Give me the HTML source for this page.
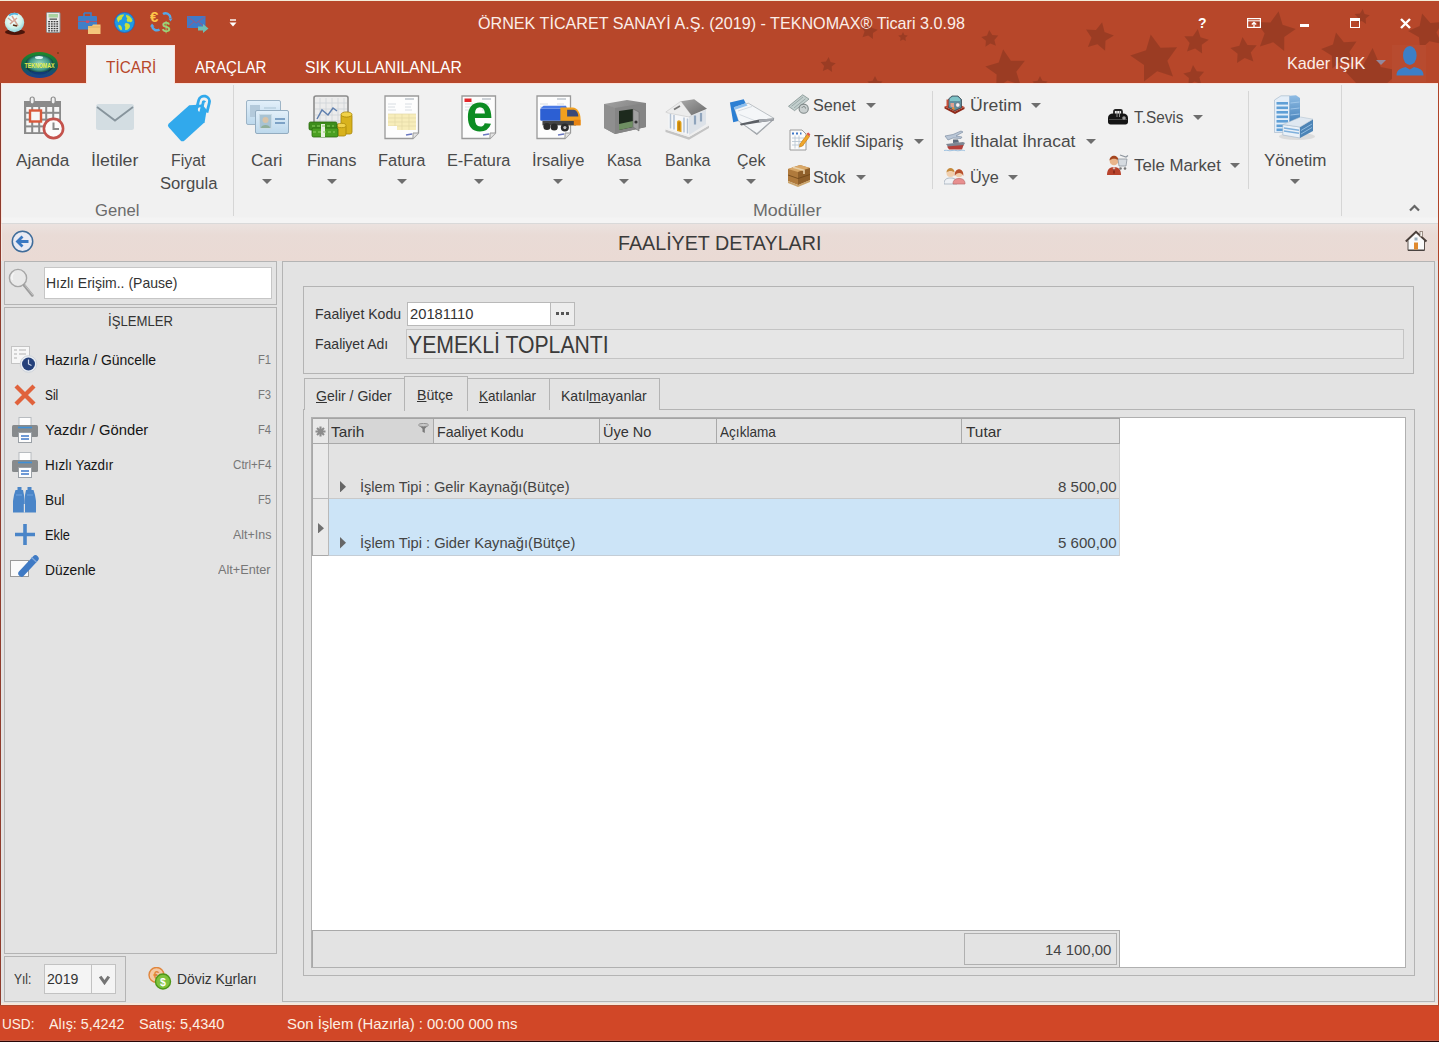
<!DOCTYPE html>
<html lang="tr">
<head>
<meta charset="utf-8">
<title>TEKNOMAX Ticari</title>
<style>
*{box-sizing:border-box;margin:0;padding:0}
html,body{width:1439px;height:1042px;overflow:hidden;background:#e3e3e3}
body{position:relative;font-family:"Liberation Sans",sans-serif;color:#333}
.abs{position:absolute}
.t{position:absolute;white-space:nowrap;line-height:1;transform-origin:0 0}
#titlebar{left:0;top:0;width:1439px;height:83px;background:#b7472a;overflow:hidden}
#topline{left:0;top:0;width:1439px;height:1px;background:#f4ecd8}
#ribbon{left:1px;top:83px;width:1437px;height:141px;background:linear-gradient(#f1f1f1,#f1f1f1 133px,#f4f4f4 134px);border-top:1px solid #fbe3dc;border-bottom:1px solid #d9d9d9;border-left:1px solid #fbe6df}
#hdr{left:1px;top:224px;width:1437px;height:37px;background:linear-gradient(#ebe2df,#e9dbd6 30%,#eadad4);border-left:1px solid #f6e9e4}
#lborder{left:0;top:83px;width:1px;height:922px;background:#8e3b2c}
#rborder{left:1438px;top:83px;width:1px;height:922px;background:#b04428}
#status{left:0;top:1005px;width:1439px;height:36px;background:#d14727;border-top:1px solid #b04a30;border-bottom:1px solid #c0604a}
#cream{left:1px;top:1003px;width:1437px;height:2px;background:#f7e6d8}
#botline{left:0;top:1041px;width:1439px;height:1px;background:#2a0606}
.arr{position:absolute;width:0;height:0;border-left:5px solid transparent;border-right:5px solid transparent;border-top:5.5px solid #6e6e6e}
.vsep{position:absolute;width:1px;background:#d6d6d6}
.box{position:absolute;border:1px solid #b9b9b9}
</style>
</head>
<body>
<div id="titlebar" class="abs"></div>
<div id="topline" class="abs"></div>
<div id="ribbon" class="abs"></div>
<div id="hdr" class="abs"></div>
<div id="lborder" class="abs"></div>
<div id="rborder" class="abs"></div>
<div id="status" class="abs"></div>
<div id="cream" class="abs"></div>
<div id="botline" class="abs"></div>
<svg class="abs" style="left:0;top:1px" width="1439" height="82" viewBox="0 1 1439 82" fill="#000" fill-opacity="0.15"><polygon points="870.6,22.1 872.2,27.9 877.9,29.7 873.0,33.1 872.9,39.1 868.2,35.4 862.5,37.3 864.5,31.6 861.1,26.8 867.0,27.0"/><polygon points="903.0,32.0 904.5,35.0 907.8,35.5 905.4,37.8 905.9,41.0 903.0,39.5 900.1,41.0 900.6,37.8 898.2,35.5 901.5,35.0"/><polygon points="989.2,30.0 992.3,35.1 998.3,35.5 994.4,40.0 995.9,45.8 990.4,43.5 985.4,46.7 985.9,40.8 981.2,37.0 987.0,35.6"/><polygon points="828.7,57.0 830.6,62.0 835.8,63.2 831.7,66.6 832.1,71.9 827.7,69.0 822.8,71.0 824.1,65.9 820.6,61.9 825.9,61.6"/><polygon points="1003.1,49.2 1010.9,60.7 1024.9,60.8 1016.3,71.8 1020.6,85.1 1007.5,80.4 996.1,88.5 996.6,74.6 985.3,66.4 998.7,62.4"/><polygon points="1102.1,22.3 1104.6,32.0 1113.9,35.4 1105.5,40.8 1105.1,50.7 1097.4,44.3 1087.9,47.0 1091.5,37.8 1086.0,29.5 1095.9,30.1"/><polygon points="875.0,76.0 877.4,80.8 882.6,81.5 878.8,85.2 879.7,90.5 875.0,88.0 870.3,90.5 871.2,85.2 867.4,81.5 872.6,80.8"/><polygon points="1040.0,76.0 1042.4,80.8 1047.6,81.5 1043.8,85.2 1044.7,90.5 1040.0,88.0 1035.3,90.5 1036.2,85.2 1032.4,81.5 1037.6,80.8"/><polygon points="1150.7,34.4 1160.5,47.8 1177.1,47.3 1167.4,60.7 1173.0,76.4 1157.2,71.3 1144.0,81.5 1144.0,64.9 1130.2,55.5 1146.0,50.3"/><polygon points="1197.8,29.1 1200.5,37.3 1208.8,39.7 1201.8,44.8 1202.1,53.5 1195.1,48.4 1187.0,51.4 1189.6,43.1 1184.3,36.3 1192.9,36.3"/><polygon points="1242.5,37.1 1247.5,44.9 1256.8,45.3 1250.8,52.5 1253.4,61.4 1244.7,58.0 1237.0,63.1 1237.6,53.8 1230.3,48.1 1239.3,45.8"/><polygon points="1278.6,11.3 1282.6,24.7 1295.8,29.1 1284.3,36.9 1284.2,50.9 1273.2,42.3 1259.9,46.6 1264.6,33.5 1256.5,22.1 1270.4,22.6"/><polygon points="1336.0,32.4 1343.9,42.3 1356.5,41.5 1349.4,52.0 1354.1,63.7 1342.0,60.3 1332.3,68.4 1331.8,55.8 1321.1,49.0 1332.9,44.6"/><polygon points="1372.6,48.0 1380.8,67.0 1400.9,71.0 1385.5,84.6 1387.9,105.0 1370.2,94.5 1351.5,103.1 1356.0,83.0 1342.1,67.9 1362.6,66.0"/><polygon points="1362.7,9.0 1364.6,14.0 1369.8,15.2 1365.7,18.6 1366.1,23.9 1361.7,21.0 1356.8,23.0 1358.1,17.9 1354.6,13.9 1359.9,13.6"/><polygon points="1422.1,13.6 1430.4,23.1 1442.9,21.7 1436.5,32.5 1441.8,44.0 1429.5,41.2 1420.2,49.7 1419.0,37.2 1408.0,31.0 1419.6,26.0"/><polygon points="1193.0,65.0 1196.8,71.3 1204.1,71.7 1199.4,77.2 1201.2,84.3 1194.5,81.5 1188.3,85.4 1188.9,78.1 1183.3,73.5 1190.4,71.8"/></svg><div class="t " id="t0" style="left:477.5px;top:14.00px;font-size:16.6px;line-height:19px;color:#fbeee9;transform:scaleX(0.9725);">ÖRNEK TİCARET SANAYİ A.Ş. (2019) - TEKNOMAX® Ticari 3.0.98</div><div class="abs" style="left:86px;top:45px;width:89px;height:39px;background:#f1f1f1;border:1px solid #fbe3dc;border-bottom:0"></div><div class="t " id="t1" style="left:105.5px;top:58.00px;font-size:17px;line-height:19px;color:#b7472a;transform:scaleX(0.9043);">TİCARİ</div><div class="t " id="t2" style="left:195px;top:58.00px;font-size:17px;line-height:19px;color:#fff;transform:scaleX(0.8890);">ARAÇLAR</div><div class="t " id="t3" style="left:304.5px;top:58.00px;font-size:17px;line-height:19px;color:#fff;transform:scaleX(0.9276);">SIK KULLANILANLAR</div><div class="t " id="t4" style="left:1287px;top:54.00px;font-size:17px;line-height:19px;color:#fbeee9;transform:scaleX(0.9536);">Kader IŞIK</div><div class="arr" style="left:1376.3px;top:59.8px;border-top-color:#94889c"></div><div class="abs" style="left:1392px;top:45px;width:34px;height:37px;background:#b84b2f"></div>
<svg class="abs" style="left:1396px;top:46px" width="28" height="30" viewBox="0 0 28 30"><ellipse cx="13.800" cy="9.500" rx="6.800" ry="9.400" fill="#3d7fc6"/><path d="M0.500 29.500C0.500 23.500 5 22.500 9.500 21L13.800 23.500L18 21C23 22.500 27.500 23.500 27.500 29.500Z" fill="#3d7fc6"/></svg>
<div class="t" style="left:1198px;top:16px;font-size:14px;font-weight:bold;color:#fff">?</div>
<svg class="abs" style="left:1246.500px;top:18px" width="14" height="10" viewBox="0 0 14 10"><rect x="0.600" y="0.600" width="12.800" height="8.800" fill="none" stroke="#fff" stroke-width="1.200"/><path d="M0.600 2.800h12.800" stroke="#fff" stroke-width="1"/><path d="M7 9V5M4.800 6.500L7 4.300L9.200 6.500" stroke="#fff" stroke-width="1.300" fill="none"/></svg>
<div class="abs" style="left:1300px;top:24px;width:9px;height:3px;background:#fff"></div>
<div class="abs" style="left:1350px;top:18px;width:10px;height:10px;border:1.500px solid #fff;border-top-width:3px"></div>
<svg class="abs" style="left:1400px;top:17.800px" width="11" height="11" viewBox="0 0 11 11"><path d="M1 1L10 10M10 1L1 10" stroke="#fff" stroke-width="2.4"/></svg>
<div class="t " id="t5" style="left:16px;top:150.00px;font-size:17.2px;line-height:20px;color:#4a4a4a;transform:scaleX(0.9975);">Ajanda</div><div class="t " id="t6" style="left:91px;top:150.00px;font-size:17.2px;line-height:20px;color:#4a4a4a;transform:scaleX(1.0336);">İletiler</div><div class="t " id="t7" style="left:171px;top:150.00px;font-size:17.2px;line-height:20px;color:#4a4a4a;transform:scaleX(0.9235);">Fiyat</div><div class="t " id="t8" style="left:251px;top:150.00px;font-size:17.2px;line-height:20px;color:#4a4a4a;transform:scaleX(0.9963);">Cari</div><div class="arr" style="left:261.8px;top:179.0px;border-top-color:#6e6e6e"></div><div class="t " id="t9" style="left:307px;top:150.00px;font-size:17.2px;line-height:20px;color:#4a4a4a;transform:scaleX(0.9575);">Finans</div><div class="arr" style="left:326.8px;top:179.0px;border-top-color:#6e6e6e"></div><div class="t " id="t10" style="left:378px;top:150.00px;font-size:17.2px;line-height:20px;color:#4a4a4a;transform:scaleX(0.9540);">Fatura</div><div class="arr" style="left:396.8px;top:179.0px;border-top-color:#6e6e6e"></div><div class="t " id="t11" style="left:447px;top:150.00px;font-size:17.2px;line-height:20px;color:#4a4a4a;transform:scaleX(0.9480);">E-Fatura</div><div class="arr" style="left:473.8px;top:179.0px;border-top-color:#6e6e6e"></div><div class="t " id="t12" style="left:532px;top:150.00px;font-size:17.2px;line-height:20px;color:#4a4a4a;transform:scaleX(0.9623);">İrsaliye</div><div class="arr" style="left:553.3px;top:179.0px;border-top-color:#6e6e6e"></div><div class="t " id="t13" style="left:607px;top:150.00px;font-size:17.2px;line-height:20px;color:#4a4a4a;transform:scaleX(0.8778);">Kasa</div><div class="arr" style="left:619.3px;top:179.0px;border-top-color:#6e6e6e"></div><div class="t " id="t14" style="left:665px;top:150.00px;font-size:17.2px;line-height:20px;color:#4a4a4a;transform:scaleX(0.9316);">Banka</div><div class="arr" style="left:682.8px;top:179.0px;border-top-color:#6e6e6e"></div><div class="t " id="t15" style="left:737px;top:150.00px;font-size:17.2px;line-height:20px;color:#4a4a4a;transform:scaleX(0.9288);">Çek</div><div class="arr" style="left:746.3px;top:179.0px;border-top-color:#6e6e6e"></div><div class="t " id="t16" style="left:1264px;top:150.00px;font-size:17.2px;line-height:20px;color:#4a4a4a;transform:scaleX(0.9895);">Yönetim</div><div class="arr" style="left:1290.3px;top:179.0px;border-top-color:#6e6e6e"></div><div class="t " id="t17" style="left:160px;top:173.00px;font-size:17.2px;line-height:20px;color:#4a4a4a;transform:scaleX(0.9688);">Sorgula</div><div class="t " id="t18" style="left:813px;top:95.00px;font-size:17.2px;line-height:20px;color:#4a4a4a;transform:scaleX(0.9439);">Senet</div><div class="arr" style="left:866.3px;top:102.5px;border-top-color:#6e6e6e"></div><div class="t " id="t19" style="left:814px;top:131.00px;font-size:17.2px;line-height:20px;color:#4a4a4a;transform:scaleX(0.9267);">Teklif Sipariş</div><div class="arr" style="left:914.3px;top:138.5px;border-top-color:#6e6e6e"></div><div class="t " id="t20" style="left:813px;top:167.00px;font-size:17.2px;line-height:20px;color:#4a4a4a;transform:scaleX(0.9417);">Stok</div><div class="arr" style="left:855.8px;top:174.5px;border-top-color:#6e6e6e"></div><div class="t " id="t21" style="left:969.5px;top:95.00px;font-size:17.2px;line-height:20px;color:#4a4a4a;transform:scaleX(1.0255);">Üretim</div><div class="arr" style="left:1031.3px;top:102.5px;border-top-color:#6e6e6e"></div><div class="t " id="t22" style="left:970px;top:131.00px;font-size:17.2px;line-height:20px;color:#4a4a4a;transform:scaleX(1.0121);">İthalat İhracat</div><div class="arr" style="left:1086.3px;top:138.5px;border-top-color:#6e6e6e"></div><div class="t " id="t23" style="left:969.5px;top:167.00px;font-size:17.2px;line-height:20px;color:#4a4a4a;transform:scaleX(0.9451);">Üye</div><div class="arr" style="left:1008.3px;top:174.5px;border-top-color:#6e6e6e"></div><div class="t " id="t24" style="left:1133.5px;top:107.00px;font-size:17.2px;line-height:20px;color:#4a4a4a;transform:scaleX(0.8916);">T.Sevis</div><div class="arr" style="left:1193.3px;top:114.5px;border-top-color:#6e6e6e"></div><div class="t " id="t25" style="left:1133.5px;top:155.00px;font-size:17.2px;line-height:20px;color:#4a4a4a;transform:scaleX(0.9781);">Tele Market</div><div class="arr" style="left:1230.3px;top:162.5px;border-top-color:#6e6e6e"></div><div class="t " id="t26" style="left:95px;top:200.00px;font-size:17.2px;line-height:20px;color:#6b6b6b;transform:scaleX(0.9678);">Genel</div><div class="t " id="t27" style="left:753px;top:200.00px;font-size:17.2px;line-height:20px;color:#6b6b6b;transform:scaleX(1.0376);">Modüller</div><div class="vsep" style="left:233px;top:85px;height:131px"></div><div class="vsep" style="left:1341px;top:85px;height:131px"></div><div class="vsep" style="left:932px;top:91px;height:98px"></div><div class="vsep" style="left:1248px;top:91px;height:98px"></div><svg class="abs" style="left:1409px;top:204px" width="11" height="8" viewBox="0 0 11 8"><path d="M1 6.5L5.5 2L10 6.5" stroke="#666" stroke-width="2.2" fill="none"/></svg><svg class="abs" style="left:23px;top:96px" width="44" height="44" viewBox="0 0 44 44"><rect x="1" y="5" width="37" height="33" fill="#8a8a8a"/><rect x="3.2" y="11.0" width="5" height="4.8" fill="#f6f6f6"/><rect x="10.2" y="11.0" width="5" height="4.8" fill="#f6f6f6"/><rect x="17.2" y="11.0" width="5" height="4.8" fill="#f6f6f6"/><rect x="24.2" y="11.0" width="5" height="4.8" fill="#f6f6f6"/><rect x="31.2" y="11.0" width="5" height="4.8" fill="#f6f6f6"/><rect x="3.2" y="17.8" width="5" height="4.8" fill="#f6f6f6"/><rect x="10.2" y="17.8" width="5" height="4.8" fill="#f6f6f6"/><rect x="17.2" y="17.8" width="5" height="4.8" fill="#f6f6f6"/><rect x="24.2" y="17.8" width="5" height="4.8" fill="#f6f6f6"/><rect x="31.2" y="17.8" width="5" height="4.8" fill="#f6f6f6"/><rect x="3.2" y="24.6" width="5" height="4.8" fill="#f6f6f6"/><rect x="10.2" y="24.6" width="5" height="4.8" fill="#f6f6f6"/><rect x="17.2" y="24.6" width="5" height="4.8" fill="#f6f6f6"/><rect x="24.2" y="24.6" width="5" height="4.8" fill="#f6f6f6"/><rect x="31.2" y="24.6" width="5" height="4.8" fill="#f6f6f6"/><rect x="3.2" y="31.4" width="5" height="4.8" fill="#f6f6f6"/><rect x="10.2" y="31.4" width="5" height="4.8" fill="#f6f6f6"/><rect x="17.2" y="31.4" width="5" height="4.8" fill="#f6f6f6"/><rect x="24.2" y="31.4" width="5" height="4.8" fill="#f6f6f6"/><rect x="31.2" y="31.4" width="5" height="4.8" fill="#f6f6f6"/><rect x="7.2" y="1" width="4" height="7" rx="2" fill="#f1f1f1" stroke="#8a8a8a" stroke-width="1.2"/><rect x="28.2" y="1" width="4" height="7" rx="2" fill="#f1f1f1" stroke="#8a8a8a" stroke-width="1.2"/><rect x="7" y="14.5" width="11" height="11" fill="#f6f6f6" stroke="#d9583a" stroke-width="2.4"/><circle cx="30.5" cy="32.5" r="9.6" fill="#fbfbfb" stroke="#c4524c" stroke-width="2.6"/><path d="M30.5 26.5V33H36" stroke="#8a8a8a" stroke-width="2" fill="none"/></svg><svg class="abs" style="left:95.5px;top:104px" width="38" height="26" viewBox="0 0 38 26"><rect x="0" y="0" width="38" height="26" rx="2.5" fill="#d3dde2"/><path d="M1 3L19 16.5L37 3" stroke="#87949c" stroke-width="1.8" fill="none"/></svg><svg class="abs" style="left:165px;top:94px" width="48" height="48" viewBox="0 0 48 48"><path d="M-17 -11.500H10L20 -3.500V3.500L10 11.500H-17Q-20 11.500 -20 8.500V-8.500Q-20 -11.500 -17 -11.500Z" fill="#31a9ec" transform="translate(24.500 26.500) rotate(-42)"/><circle cx="35" cy="15.500" r="2.300" fill="#f1f1f1"/><path d="M-5.500 9V-2a5.500 5.500 0 0 1 11 0V8M-0.500 9V-1.500a1 1 0 0 1 1.500 0" stroke="#31a9ec" stroke-width="2.800" fill="none" transform="translate(38.500 9.500) rotate(14)"/></svg><svg class="abs" style="left:246px;top:100px" width="44" height="35" viewBox="0 0 44 35"><defs><linearGradient id="cg" x1="0" y1="0" x2="0" y2="1"><stop offset="0" stop-color="#e3f0fa"/><stop offset="1" stop-color="#bcd8ec"/></linearGradient></defs>
<rect x="0.5" y="0.5" width="34" height="24" rx="1.5" fill="url(#cg)" stroke="#9db4c6"/><rect x="4" y="5" width="10" height="12" fill="#b4cadb"/><path d="M18 8h12M18 12h12" stroke="#b9cfe0" stroke-width="1.5"/>
<rect x="9.5" y="10.5" width="33" height="23" rx="1.5" fill="url(#cg)" stroke="#93acc0"/><rect x="13.5" y="14.5" width="12" height="14" fill="#a8c3d3" stroke="#c9dbe6"/><circle cx="19.5" cy="20" r="3" fill="#d8c3a8"/><path d="M15 28c0-4 9-4 9 0z" fill="#8fae9a"/><path d="M29 19h10M29 23h10" stroke="#7da2c6" stroke-width="2"/></svg><svg class="abs" style="left:308px;top:95px" width="46" height="44" viewBox="0 0 46 44"><rect x="6" y="1" width="34" height="30" rx="2" fill="#ececec" stroke="#8c8c8c" stroke-width="1.6"/>
<path d="M12 3v26M18 3v26M24 3v26M30 3v26M36 3v26M7 8h32M7 14h32M7 20h32M7 26h32" stroke="#cfd4d8" stroke-width="0.8"/>
<path d="M9 24l5-9 6 5 5-7 4 3" stroke="#5f7fae" stroke-width="1.5" fill="none"/>
<g fill="#d8b21d" stroke="#a88608" stroke-width="0.8"><rect x="33" y="19" width="11" height="20" rx="2"/><ellipse cx="38.5" cy="19.5" rx="5.5" ry="2.6" fill="#f1d24a"/><rect x="29" y="30" width="9" height="11" rx="2"/><ellipse cx="33.500" cy="30.5" rx="4.500" ry="2.200" fill="#f1d24a"/></g>
<g><rect x="1" y="27" width="28" height="8" rx="1.5" fill="#3d8d1c" stroke="#2b6b10" stroke-width="0.8"/><rect x="4" y="33" width="26" height="9" rx="1.5" fill="#4aa022" stroke="#2b6b10" stroke-width="0.8"/><rect x="13" y="29" width="4" height="13" fill="#e9efe2"/><path d="M5 37h22M4 31h22" stroke="#8fd062" stroke-width="1.2" stroke-dasharray="3 2"/></g></svg><svg class="abs" style="left:383.5px;top:95px" width="50" height="45" viewBox="0 0 50 45"><path d="M1 1H34.500V38L29 43.500H1Z" fill="#fdfdfd" stroke="#9a9a9a" stroke-width="1.3"/><path d="M34.500 38H29V43.500" fill="#e3e3e3" stroke="#9a9a9a" stroke-width="1"/>
<path d="M21 4h9" stroke="#b9c0c8" stroke-width="1.4"/><path d="M4 9h8M4 12h7M4 15h8M21 9h7M21 12h6M21 15h7" stroke="#d8dde2" stroke-width="1"/><path d="M22 40l6-1" stroke="#6a78c0" stroke-width="1.6"/><rect x="4" y="19" width="28" height="16" fill="#f7edba"/><path d="M4 19h28M4 23h28M4 27h28M4 31h28M11 19v16M18 19v16M25 19v16" stroke="#e3d9a6" stroke-width="0.7"/><rect x="4" y="31" width="9" height="4" fill="#fdfdfd"/></svg><svg class="abs" style="left:461px;top:95px" width="50" height="45" viewBox="0 0 50 45"><path d="M1 1H34.500V38L29 43.500H1Z" fill="#fdfdfd" stroke="#9a9a9a" stroke-width="1.3"/><path d="M34.500 38H29V43.500" fill="#e3e3e3" stroke="#9a9a9a" stroke-width="1"/>
<path d="M21 4h9" stroke="#b9c0c8" stroke-width="1.4"/><path d="M4 9h8M4 12h7M4 15h8M21 9h7M21 12h6M21 15h7" stroke="#d8dde2" stroke-width="1"/><path d="M22 40l6-1" stroke="#6a78c0" stroke-width="1.6"/><path d="M3.500 3.500h7v3.500h-7z" fill="#e3262a"/><text x="18.500" y="36" font-family="Liberation Sans,sans-serif" font-weight="bold" font-size="54" fill="#0c8c22" text-anchor="middle" transform="translate(17.700 0) scale(0.900 1) translate(-17.700 0)">e</text></svg><svg class="abs" style="left:536px;top:95px" width="50" height="45" viewBox="0 0 50 45"><path d="M1 1H34.500V38L29 43.500H1Z" fill="#fdfdfd" stroke="#9a9a9a" stroke-width="1.3"/><path d="M34.500 38H29V43.500" fill="#e3e3e3" stroke="#9a9a9a" stroke-width="1"/>
<path d="M21 4h9" stroke="#b9c0c8" stroke-width="1.4"/><path d="M4 9h8M4 12h7M4 15h8M21 9h7M21 12h6M21 15h7" stroke="#d8dde2" stroke-width="1"/><path d="M22 40l6-1" stroke="#6a78c0" stroke-width="1.6"/><g transform="translate(-2.500 -5.500) scale(1.120)"><rect x="6" y="17" width="24" height="11" rx="1" fill="#2c5fd3"/><path d="M6 17l3-2.500h20l1 2.500z" fill="#4a7ae6"/>
<path d="M24 16h11c4 0 7 5 7 10v6H24z" fill="#f2a01e"/><path d="M30 18h6c2 0 4 3 4 6h-10z" fill="#3a4a78"/><rect x="8" y="28" width="30" height="4" fill="#444"/>
<circle cx="12" cy="33" r="3.200" fill="#2a2a2a"/><circle cx="18.500" cy="33.500" r="3.200" fill="#2a2a2a"/><circle cx="28" cy="34" r="3.600" fill="#2a2a2a"/><circle cx="28" cy="34" r="1.400" fill="#bbb"/><path d="M36 27h6v5h-6z" fill="#e88312"/></g></svg><svg class="abs" style="left:603px;top:99.5px" width="44" height="35" viewBox="0 0 44 35"><defs><linearGradient id="kg" x1="0" y1="0" x2="1" y2="1"><stop offset="0" stop-color="#a2a2a2"/><stop offset="1" stop-color="#6e6e6e"/></linearGradient></defs>
<path d="M1 4L24 0L43 3V27L12 34L1 28Z" fill="url(#kg)"/><path d="M1 4L12 8V34L1 28Z" fill="#8f8f8f"/><path d="M12 8L43 3V27L12 34Z" fill="#858585"/>
<path d="M16 11L30 9V27L16 30Z" fill="#1d2a1d"/><path d="M16 24L30 21V27L16 30Z" fill="#6e8f62"/><path d="M30 9L36 12V31L30 27Z" fill="#a0a0a0" stroke="#6a6a6a" stroke-width="0.6"/><circle cx="33" cy="22" r="1.600" fill="#333"/></svg><svg class="abs" style="left:664.5px;top:98px" width="45" height="43" viewBox="0 0 45 43"><defs><linearGradient id="bg1" x1="0" y1="0" x2="1" y2="1"><stop offset="0" stop-color="#a8a8a8"/><stop offset="1" stop-color="#6a6a6a"/></linearGradient></defs>
<path d="M0.500 31.500L24 39L44 27.500V30L24 41.800L0.500 34Z" fill="#c4c4c4"/><path d="M0.500 31.500L24 39L44 27.500L41 25L24 35L3.500 29Z" fill="#efefef"/>
<path d="M3.500 14.500V31L24 37V18.500Z" fill="#f6f7f9"/><path d="M24 18.500V37L41 26.300V11.800Z" fill="#dde2e8"/>
<path d="M5.500 16v14.500M9 17v14.500M19 19.500v15M22.500 20.500v15" stroke="#b4c2d4" stroke-width="1.500"/><path d="M30 17.500v9M36 15v8.500" stroke="#8fa4bc" stroke-width="2.200"/>
<path d="M12 33v-8.500c0-3.500 4.500-2.500 4.500 0.500V34.300z" fill="#e0a21c"/><path d="M13.200 32v-7c0-2 2-1.500 2 0v7.500z" fill="#c4820c"/>
<path d="M0.800 14L16 3.200L26.500 17.300L24 19L3 15Z" fill="#ececec" stroke="#c4c4c4" stroke-width="0.600"/><path d="M9 11.500l6-3.500" stroke="#777" stroke-width="1.800"/>
<path d="M16 3.200L29.200 1.200L42 10.800L26.500 17.300Z" fill="url(#bg1)"/></svg><svg class="abs" style="left:728.5px;top:98px" width="47" height="38" viewBox="0 0 47 38"><path d="M9.400 23L27.900 37L45.100 21.500L44 20Z" fill="#9a9ea3"/><path d="M4.800 9.200L19.300 5.200L45.100 20.400L27.900 35.500L9.400 23Z" fill="#f4f6f8" stroke="#a4aab0" stroke-width="0.700"/>
<path d="M0.900 4.500L14.700 1.200L16.700 5.200L4.800 9.200L9.400 23L4.200 24.300Z" fill="#2b7fd3"/><path d="M4.800 9.200L16.700 5.200L18.500 7.500L6 11.800Z" fill="#8fc0ee"/>
<path d="M9 13l14-4.500M10.500 16.500l20 8" stroke="#d3d8de" stroke-width="0.900"/><path d="M10.800 25.700L30 21.500L45.100 20.400L44.500 22.500L30 24.500L12 27.500Z" fill="#5c6066"/><path d="M30 21.500L45.100 20.400L44.500 22.500L30 24.500Z" fill="#a4a8ae"/></svg><svg class="abs" style="left:1272px;top:95px" width="45" height="46" viewBox="0 0 45 46"><defs><linearGradient id="yg" x1="0" y1="0" x2="0" y2="1"><stop offset="0" stop-color="#8fbce4"/><stop offset="1" stop-color="#3f7cb6"/></linearGradient></defs>
<ellipse cx="25" cy="41.500" rx="18" ry="3.500" fill="#dcdcdc"/>
<path d="M2.500 5L9 0.800H17.500V37.500H2.500Z" fill="#e4eef8" stroke="#9fb4c8" stroke-width="0.600"/><rect x="4.500" y="7" width="11.500" height="2.600" fill="#5f9fd6"/><rect x="4.500" y="11.5" width="11.500" height="2.600" fill="#5f9fd6"/><rect x="4.500" y="16" width="11.500" height="2.600" fill="#5f9fd6"/><rect x="4.500" y="20.5" width="11.500" height="2.600" fill="#5f9fd6"/><rect x="4.500" y="25" width="11.500" height="2.600" fill="#5f9fd6"/><rect x="4.500" y="29.5" width="11.500" height="2.600" fill="#5f9fd6"/><rect x="4.500" y="33.5" width="11.500" height="2.600" fill="#5f9fd6"/><path d="M17.500 0.800L24 0.200L28 3V30H17.500Z" fill="url(#yg)"/><path d="M18.500 8l9-1M18.500 14l9-1M18.500 20l9-1" stroke="#a9cdee" stroke-width="0.800"/>
<path d="M10.800 29.500L28 32V43L10.800 40Z" fill="#eaf1f8" stroke="#9fb4c8" stroke-width="0.600"/><path d="M12 33l15 2.200M12 36l15 2.200" stroke="#7fb0dc" stroke-width="1.500"/>
<path d="M28 32L41 24.200V36L28 43Z" fill="#4c84b6"/><path d="M29 35.500l11-6.500M29 39l11-6.500" stroke="#8fbbe0" stroke-width="1"/>
<path d="M10.800 29.500L28.600 22L41 24.200L28 32Z" fill="#dfe8f1" stroke="#a9bccd" stroke-width="0.500"/></svg><svg class="abs" style="left:788px;top:94px" width="21" height="21" viewBox="0 0 21 21"><path d="M0.500 12.300L14.700 0.800L21 5.100L6.600 16.600Z" fill="#c3cfce" stroke="#8b9a99" stroke-width="0.900"/><path d="M3.500 12.300L15 3M6 14L17.500 4.800" stroke="#95a5a4" stroke-width="0.900"/><circle cx="15.700" cy="14.700" r="4.600" fill="#c9cfcf" stroke="#7f8888" stroke-width="1.100"/><path d="M14 14c0.500-2 3.500-2 3.500 0.500" stroke="#6f7878" fill="none" stroke-width="0.900"/></svg><svg class="abs" style="left:788.5px;top:129px" width="22" height="22" viewBox="0 0 22 22"><path d="M1 1H13L17 5V21H1Z" fill="#fbfbfb" stroke="#9a9a9a"/><path d="M3 9h12M3 12.500h12M3 16h12M6 6.500v13M10 6.500v13" stroke="#b9c6d3" stroke-width="0.900"/><path d="M3 4.500h2M7 4.500h2M11 4.500h1.500" stroke="#3f78c8" stroke-width="1.800"/>
<path d="M18.500 5L20.500 7.500L13.500 17L10.500 18L11 15Z" fill="#f1a72a" stroke="#c27c12" stroke-width="0.700"/><path d="M17.500 4.500l2-1 1.800 2-1 1.800z" fill="#e0574f"/></svg><svg class="abs" style="left:787px;top:164px" width="24" height="24" viewBox="0 0 24 24"><path d="M1 5L13 1L23 4V16L11 21L1 17Z" fill="#b07a3c"/><path d="M1 5L13 1L23 4L11 8Z" fill="#d9a868"/><path d="M11 8L23 4V16L11 21Z" fill="#8f5f2a"/><path d="M1 11l10 3.500 12-4" stroke="#6d4518" stroke-width="0.800" fill="none"/><path d="M6 3.300l11 3V10" stroke="#e8cfa6" stroke-width="1.600" fill="none"/><path d="M1 17l10 4 12-5v2l-12 5-10-4z" fill="#caa46c"/></svg><svg class="abs" style="left:944px;top:93.5px" width="21" height="21" viewBox="0 0 21 21"><path d="M0.500 12.500L11 17.500L20.500 13L11 8.500Z" fill="#c8452e"/><path d="M0.500 12.500L11 17.500L20.500 13V15L11 20L0.500 14.500Z" fill="#8f2a1a"/>
<path d="M4.500 5L8 2H14L17.500 5.500V13.500L11 16.500L4.500 13.500Z" fill="#5f8f9f" stroke="#3a4a52" stroke-width="0.800"/><path d="M6 4.500L8.500 2.800H13.500L16 5V7H6Z" fill="#7fc4c8"/><path d="M2.500 5.500h2v7l-2-1z" fill="#c8503a"/><path d="M6.500 9h3.500v5l-3.500-1.500z" fill="#e0a090"/><circle cx="13.800" cy="11" r="2.200" fill="#f2f4f6" stroke="#556" stroke-width="0.500"/><path d="M8 13.500h2.500v2.500l-2.500-1z" fill="#f08a2a"/></svg><svg class="abs" style="left:943.5px;top:130px" width="22" height="22" viewBox="0 0 22 22"><path d="M1 6L9 4.500L17 1L19 2L12 6L18 7L17 8.500L9 8L4 10Z" fill="#b9c6d6" stroke="#7f8fa3" stroke-width="0.700"/><path d="M2 14L19 12L21 13L18 18H5Z" fill="#7d8794"/><path d="M3 16.500L19.500 15L18 19.500H5Z" fill="#b5403a"/><path d="M9 13V9.500h5L15 12.500z" fill="#5f6c7d"/><path d="M0 20.500c3-1 5 1 8 0s5 1 8 0 4 0.500 5 0" stroke="#9fc2e0" fill="none"/></svg><svg class="abs" style="left:944px;top:167px" width="22" height="18" viewBox="0 0 22 18"><circle cx="6.500" cy="6" r="4" fill="#f0cfae"/><path d="M2.500 5.500c0-6 8-6 8 0-2-2-6-2-8 0z" fill="#c58a3c"/><path d="M0 17c0-5 3-6 6.500-6s6.500 1 6.500 6z" fill="#eef1f5" stroke="#9aa6b5" stroke-width="0.700"/>
<circle cx="15" cy="6.500" r="3.800" fill="#f0cfae"/><path d="M10.800 9c-1-9 9.500-9 8.500 0-1-4-7-4-8.500 0z" fill="#b8502c"/><path d="M9 17c0-4.500 3-5.500 6-5.500s6 1 6 5.500z" fill="#e88f8f" stroke="#b96a6a" stroke-width="0.700"/></svg><svg class="abs" style="left:1107px;top:108.5px" width="22" height="17" viewBox="0 0 22 17"><path d="M1 9c0-3 2-4.500 5-4.500h10c3 0 5 1.500 5 4.500v4c0 1.500-1 2.500-2.500 2.500h-15c-1.500 0-2.500-1-2.500-2.500z" fill="#151515"/><path d="M7 5V2.500c0-1 .5-1.500 1.500-1.500h5c1 0 1.500 .5 1.500 1.500V5" stroke="#222" stroke-width="1.800" fill="none"/><path d="M10 2v6M12.500 2v6" stroke="#8d8d8d" stroke-width="1"/><path d="M2 10.500h18" stroke="#555" stroke-width="0.800"/><circle cx="17" cy="9" r="1.800" fill="#9a9a9a"/></svg><svg class="abs" style="left:1107px;top:153.5px" width="22" height="22" viewBox="0 0 22 22"><circle cx="7" cy="7" r="4.300" fill="#e9b58a"/><path d="M2.500 6.500c0-6.500 9-6.500 9 0-2.500-2.500-6.500-2.500-9 0z" fill="#a4461f"/><path d="M0 21c0-6 3-8 7-8s7 2 7 8z" fill="#b8432c"/><path d="M5.500 13.500L7 17l1.500-3.500z" fill="#fff"/><path d="M7 14.500v5" stroke="#7a1f10" stroke-width="1.200"/>
<path d="M11 5h9l-1 7h-7z" fill="#d6dbe0" stroke="#8f979f" stroke-width="0.800"/><path d="M13 1l6 2 2-1.500" stroke="#8f979f" stroke-width="1.200" fill="none"/><circle cx="13.500" cy="14.500" r="1.300" fill="#777"/><circle cx="18" cy="14.500" r="1.300" fill="#777"/></svg><svg class="abs" style="left:4px;top:11.5px" width="24" height="24" viewBox="0 0 24 24"><defs><radialGradient id="og" cx="0.45" cy="0.35" r="0.7"><stop offset="0" stop-color="#ffffff"/><stop offset="0.6" stop-color="#d2f3ea"/><stop offset="1" stop-color="#7fc9d6"/></radialGradient></defs>
<ellipse cx="11" cy="20" rx="10" ry="3" fill="#3a0d05" opacity="0.85"/><circle cx="10.500" cy="10.500" r="9.700" fill="url(#og)"/><path d="M4 6l5 4M8 4l6 10M6 12l7-6" stroke="#c9806a" stroke-width="1.500" opacity="0.700"/><path d="M9 13l4 1" stroke="#5a2a10" stroke-width="1.800"/><path d="M5 3.500a9 9 0 0 1 9 -1" stroke="#55b4e0" stroke-width="1.800" fill="none"/></svg><svg class="abs" style="left:45.5px;top:11.5px" width="15" height="21" viewBox="0 0 15 21"><rect x="0.500" y="0.500" width="13.500" height="20" rx="1" fill="#e9e9e9" stroke="#8f8f8f"/><rect x="2.500" y="2" width="9.500" height="3.500" fill="#a9d3a0"/><rect x="3.500" y="6.500" width="7.500" height="1.300" fill="#555"/><rect x="2.2" y="9.0" width="1.800" height="1.300" fill="#3a3a3a"/><rect x="4.9" y="9.0" width="1.800" height="1.300" fill="#3a3a3a"/><rect x="7.6000000000000005" y="9.0" width="1.800" height="1.300" fill="#3a3a3a"/><rect x="10.3" y="9.0" width="1.800" height="1.300" fill="#3a3a3a"/><rect x="2.2" y="11.3" width="1.800" height="1.300" fill="#3a3a3a"/><rect x="4.9" y="11.3" width="1.800" height="1.300" fill="#3a3a3a"/><rect x="7.6000000000000005" y="11.3" width="1.800" height="1.300" fill="#3a3a3a"/><rect x="10.3" y="11.3" width="1.800" height="1.300" fill="#3a3a3a"/><rect x="2.2" y="13.6" width="1.800" height="1.300" fill="#3a3a3a"/><rect x="4.9" y="13.6" width="1.800" height="1.300" fill="#3a3a3a"/><rect x="7.6000000000000005" y="13.6" width="1.800" height="1.300" fill="#3a3a3a"/><rect x="10.3" y="13.6" width="1.800" height="1.300" fill="#3a3a3a"/><rect x="2.2" y="15.899999999999999" width="1.800" height="1.300" fill="#3a3a3a"/><rect x="4.9" y="15.899999999999999" width="1.800" height="1.300" fill="#3a3a3a"/><rect x="7.6000000000000005" y="15.899999999999999" width="1.800" height="1.300" fill="#3a3a3a"/><rect x="10.3" y="15.899999999999999" width="1.800" height="1.300" fill="#3a3a3a"/><rect x="2.2" y="18.2" width="1.800" height="1.300" fill="#3a3a3a"/><rect x="4.9" y="18.2" width="1.800" height="1.300" fill="#3a3a3a"/><rect x="7.6000000000000005" y="18.2" width="1.800" height="1.300" fill="#3a3a3a"/><rect x="10.3" y="18.2" width="1.800" height="1.300" fill="#3a3a3a"/></svg><svg class="abs" style="left:78px;top:12px" width="23" height="23" viewBox="0 0 23 23"><path d="M6 1h7v3" stroke="#3f7fc8" stroke-width="1.600" fill="none"/><path d="M6 4V1" stroke="#3f7fc8" stroke-width="1.600"/><rect x="0" y="4" width="19" height="13.500" rx="1.200" fill="#3f7fc8"/><path d="M0 9.500h19" stroke="#9a5a78" stroke-width="1"/><rect x="8" y="8.500" width="3" height="2.500" fill="#c8506a"/>
<path d="M10 14h4l1-1.500h7.500V22H10z" fill="#f4c77c"/><path d="M10 15h12.500" stroke="#d9a75a" stroke-width="0.800"/></svg><svg class="abs" style="left:114px;top:11.5px" width="21" height="21" viewBox="0 0 21 21"><circle cx="10.500" cy="10.500" r="10" fill="#1f9be6" stroke="#2a62b8" stroke-width="0.900"/><path d="M3 6c2-3 5-4 7-3.500c0 2-2 2-2 4s-3 1-3 3-2 0-2-3.500zM12 3c3 0 6 3 6.500 6c-1 0-1 2-2.500 1s-2 1-3-1 1-2 0-3-1-2-1-3zM12 11c2 0 4 1 4 3s-2 4-4 4 0-2-1-3.500 0-3.500 1-3.500zM5 13c2 0 3 2 3 4s-2 1-3-1-1-3 0-3z" fill="#c9e03a"/></svg><svg class="abs" style="left:149.5px;top:11px" width="24" height="23" viewBox="0 0 24 23"><text x="0" y="11" font-family="Liberation Sans,sans-serif" font-weight="bold" font-size="15" fill="#ffc648">€</text><text x="12" y="20.500" font-family="Liberation Sans,sans-serif" font-weight="bold" font-size="15" fill="#9bd47a">$</text>
<path d="M13 3c3-2 7 0 7.500 4" stroke="#56a8e8" stroke-width="2.400" fill="none"/><path d="M18.500 7.500h4l-2 3z" fill="#56a8e8"/><path d="M9.500 18.500c-3 2-7 0-7.500-3.500" stroke="#56a8e8" stroke-width="2.400" fill="none"/><path d="M0 15.500h4.500l-2.500-3z" fill="#56a8e8"/></svg><svg class="abs" style="left:186.5px;top:16px" width="22" height="17" viewBox="0 0 22 17"><rect x="0" y="0" width="18.500" height="12" fill="#3f7ac8"/><path d="M0.500 0.500L9.250 7L18 0.500M0.500 11.500L7 5.500M18 11.500L11.500 5.500" stroke="#b8506a" stroke-width="0.900" fill="none" opacity="0.800"/><path d="M11 10.500h5V8l5.500 4.500L16 17v-2.500h-5z" fill="#6fbdb2"/></svg><svg class="abs" style="left:229px;top:19px" width="8" height="8" viewBox="0 0 8 8"><path d="M1 1h6" stroke="#fff" stroke-width="1.400"/><path d="M0.500 3.500h7L4 7.500z" fill="#fff"/></svg><svg class="abs" style="left:21px;top:52px" width="37" height="26" viewBox="0 0 37 26"><defs><linearGradient id="lg" x1="0" y1="0" x2="0" y2="1"><stop offset="0" stop-color="#1d8a2a"/><stop offset="0.550" stop-color="#12604a"/><stop offset="1" stop-color="#1a3f96"/></linearGradient>
<radialGradient id="lg2" cx="0.5" cy="0.45" r="0.5"><stop offset="0" stop-color="#9fd9c0"/><stop offset="0.700" stop-color="#3f9a86"/><stop offset="1" stop-color="#0e3a3a"/></radialGradient></defs>
<ellipse cx="18.500" cy="13" rx="18.500" ry="13" fill="url(#lg)"/><ellipse cx="18.500" cy="12.500" rx="14" ry="9.500" fill="url(#lg2)"/><path d="M8 18c4 6 17 6 21 0c-5 3-16 3-21 0z" fill="#123a7a"/><ellipse cx="18" cy="5.500" rx="4" ry="1.500" fill="#d8f3f3"/>
<text x="18.500" y="15.500" font-family="Liberation Sans,sans-serif" font-weight="bold" font-size="7.500" fill="#e8ef4a" text-anchor="middle" textLength="30" lengthAdjust="spacingAndGlyphs">TEKNOMAX</text></svg><div class="abs" style="left:57px;top:52px;width:2px;height:2px;background:#7a3a1a;border-radius:1px"></div><div class="t " id="t28" style="left:618px;top:231.00px;font-size:20.9px;line-height:23px;color:#3a3a3a;transform:scaleX(0.9419);">FAALİYET DETAYLARI</div><svg class="abs" style="left:11px;top:230px" width="23" height="23" viewBox="0 0 23 23"><circle cx="11.500" cy="11.500" r="10.200" fill="#e9eaf3" stroke="#3f6c9a" stroke-width="1.500"/><path d="M17.500 11.500H7M11.500 6.500L6.500 11.500L11.500 16.500" stroke="#3a78c2" stroke-width="2.800" fill="none"/></svg><svg class="abs" style="left:1404.5px;top:229.5px" width="23" height="23" viewBox="0 0 23 23"><path d="M3 10.500V20.500H19.500V10.500L11 3Z" fill="#fafafa"/><path d="M3 19.500h16.500v1.500H3z" fill="#4a4340"/><path d="M3 10.500V20.500M19.500 10.500V20.500" stroke="#5a524e" stroke-width="1"/><path d="M0.800 11.500L11 1.800L21.500 11.500" stroke="#4a3f3a" stroke-width="2" fill="none"/><rect x="15" y="1.500" width="2.500" height="5" fill="#f4f0ec" stroke="#7a6a5e" stroke-width="0.700"/><rect x="9" y="12.500" width="4" height="7" fill="#e0892c"/><rect x="9.500" y="7.500" width="3" height="3" fill="#9fb0bc"/></svg><div class="abs" style="left:4px;top:261px;width:273px;height:44px;border:1px solid #b4b4b4;background:transparent;"></div><div class="abs" style="left:44px;top:267px;width:228px;height:32px;border:1px solid #c6c6c6;background:#fff;"></div><div class="t " id="t29" style="left:46px;top:275.00px;font-size:14.8px;line-height:16px;color:#333;transform:scaleX(0.9456);">Hızlı Erişim.. (Pause)</div><svg class="abs" style="left:8px;top:268px" width="30" height="30" viewBox="0 0 30 30"><circle cx="10" cy="10" r="8.600" fill="#e9e9e9" stroke="#a6a6a6" stroke-width="1.400"/><path d="M4.500 12a6 6 0 0 1 1.500 -7" stroke="#f6f6f6" stroke-width="1.600" fill="none"/><path d="M16.300 17.300L24.300 27.300" stroke="#9c9c9c" stroke-width="2.800" stroke-linecap="round"/><path d="M16.800 17L24.800 27" stroke="#c4c4c4" stroke-width="1" stroke-linecap="round"/></svg><div class="abs" style="left:4px;top:307px;width:273px;height:647px;border:1px solid #b4b4b4;background:transparent;"></div><div class="t " id="t30" style="left:108.3px;top:312.00px;font-size:15.2px;line-height:17px;color:#333;transform:scaleX(0.8652);">İŞLEMLER</div><div class="t " id="t31" style="left:45px;top:351.00px;font-size:15px;line-height:17px;color:#151515;transform:scaleX(0.9319);">Hazırla / Güncelle</div><div class="t " id="t32" style="left:257.8px;top:353.00px;font-size:12.2px;line-height:14px;color:#777;transform:scaleX(0.9203);">F1</div><div class="t " id="t33" style="left:45px;top:386.00px;font-size:15px;line-height:17px;color:#151515;transform:scaleX(0.7918);">Sil</div><div class="t " id="t34" style="left:257.8px;top:388.00px;font-size:12.2px;line-height:14px;color:#777;transform:scaleX(0.9203);">F3</div><div class="t " id="t35" style="left:45px;top:421.00px;font-size:15px;line-height:17px;color:#151515;transform:scaleX(0.9859);">Yazdır / Gönder</div><div class="t " id="t36" style="left:257.8px;top:423.00px;font-size:12.2px;line-height:14px;color:#777;transform:scaleX(0.9203);">F4</div><div class="t " id="t37" style="left:45px;top:456.00px;font-size:15px;line-height:17px;color:#151515;transform:scaleX(0.8970);">Hızlı Yazdır</div><div class="t " id="t38" style="left:232.5px;top:458.00px;font-size:12.2px;line-height:14px;color:#777;transform:scaleX(0.9529);">Ctrl+F4</div><div class="t " id="t39" style="left:45px;top:491.00px;font-size:15px;line-height:17px;color:#151515;transform:scaleX(0.9037);">Bul</div><div class="t " id="t40" style="left:257.8px;top:493.00px;font-size:12.2px;line-height:14px;color:#777;transform:scaleX(0.9203);">F5</div><div class="t " id="t41" style="left:45px;top:526.00px;font-size:15px;line-height:17px;color:#151515;transform:scaleX(0.8531);">Ekle</div><div class="t " id="t42" style="left:232.5px;top:528.00px;font-size:12.2px;line-height:14px;color:#777;transform:scaleX(1.0210);">Alt+Ins</div><div class="t " id="t43" style="left:45px;top:561.00px;font-size:15px;line-height:17px;color:#151515;transform:scaleX(0.9228);">Düzenle</div><div class="t " id="t44" style="left:218.3px;top:563.00px;font-size:12.2px;line-height:14px;color:#777;transform:scaleX(1.0419);">Alt+Enter</div><svg class="abs" style="left:11px;top:345.5px" width="27" height="28" viewBox="0 0 27 28"><rect x="0.500" y="0.500" width="18" height="17" fill="#f7f7f7" stroke="#c4c4c4"/><path d="M3 4h3M8 4h7M3 8h3M8 8h7M3 12h3" stroke="#c9c9c9" stroke-width="1.400"/><circle cx="17.500" cy="18" r="8.300" fill="#e9edf2" stroke="#cfd4da" stroke-width="1"/><circle cx="17.500" cy="18" r="6.500" fill="#24407a"/><path d="M17.500 13.500V18l3 1.500" stroke="#cfd8ea" stroke-width="1.200" fill="none"/></svg><svg class="abs" style="left:14px;top:383.5px" width="22" height="22" viewBox="0 0 22 22"><path d="M2 2L20 20M20 2L2 20" stroke="#e0623c" stroke-width="4.300"/></svg><svg class="abs" style="left:11.5px;top:416.5px" width="26" height="26" viewBox="0 0 26 26"><rect x="7" y="0.500" width="12" height="9" fill="#fdfdfd" stroke="#b8bcc0"/><rect x="0" y="8" width="26" height="12" rx="1.500" fill="#878a8c"/><path d="M6 10.500h14" stroke="#3f8fd6" stroke-width="1.600"/><rect x="6.500" y="15.500" width="13" height="10" fill="#fdfdfd" stroke="#9aa0a6"/><path d="M9 19h8M9 22h8" stroke="#3f78c8" stroke-width="1.400"/></svg><svg class="abs" style="left:11.5px;top:451.5px" width="26" height="26" viewBox="0 0 26 26"><rect x="7" y="0.500" width="12" height="9" fill="#fdfdfd" stroke="#b8bcc0"/><rect x="0" y="8" width="26" height="12" rx="1.500" fill="#878a8c"/><path d="M6 10.500h14" stroke="#3f8fd6" stroke-width="1.600"/><rect x="6.500" y="15.500" width="13" height="10" fill="#fdfdfd" stroke="#9aa0a6"/><path d="M9 19h8M9 22h8" stroke="#3f78c8" stroke-width="1.400"/></svg><svg class="abs" style="left:13px;top:486.5px" width="23" height="26" viewBox="0 0 23 26"><g fill="#4a85c8"><path d="M4.500 0h4v3h1.500l1 5l0.500 6v11.500H0V14l1-6l1.500-5h2z"/><path d="M14.500 0h4v3h2l1.500 5l1 6v11.500H11.500V14l0.500-6l1-5h1.500z"/></g><path d="M10.800 17v8.500h1.200V17z" fill="#e3e3e3"/><path d="M3 8h6M14 8h6" stroke="#6fa0dc" stroke-width="1"/></svg><svg class="abs" style="left:14.5px;top:524px" width="20" height="21" viewBox="0 0 20 21"><path d="M10 0V21M0 10.500H20" stroke="#4a85c8" stroke-width="3.600"/></svg><svg class="abs" style="left:10px;top:553.5px" width="30" height="24" viewBox="0 0 30 24"><rect x="0.500" y="6.500" width="18" height="16" fill="#fbfbfb" stroke="#9a9a9a"/><path d="M25.500 4.500L11.500 19.500" stroke="#3f7ac4" stroke-width="6.400" stroke-linecap="round"/><path d="M21.500 3.500l5 4.500" stroke="#7fa8dc" stroke-width="1.300"/></svg><div class="abs" style="left:4px;top:956px;width:122px;height:46px;border:1px solid #b4b4b4;background:transparent;"></div><div class="abs" style="left:44px;top:964px;width:72px;height:30px;border:1px solid #c2c2c2;background:#f4f4f4;"></div><div class="abs" style="left:91px;top:965px;width:1px;height:28px;background:#c2c2c2"></div><svg class="abs" style="left:98.5px;top:974.5px" width="11" height="10" viewBox="0 0 11 10"><path d="M1.200 1.500L5.500 7.600L9.800 1.500" stroke="#747474" stroke-width="3" fill="none"/></svg><div class="t " id="t45" style="left:13.5px;top:971.00px;font-size:14.8px;line-height:16px;color:#333;transform:scaleX(0.8134);">Yıl:</div><div class="t " id="t46" style="left:46.5px;top:971.00px;font-size:14.8px;line-height:16px;color:#333;transform:scaleX(0.9538);">2019</div><div class="t " id="t47" style="left:177.3px;top:971.00px;font-size:14.8px;line-height:16px;color:#333;transform:scaleX(0.9386);">Döviz K<u>u</u>rları</div><svg class="abs" style="left:148px;top:966.5px" width="24" height="24" viewBox="0 0 24 24"><circle cx="8.500" cy="8" r="7.500" fill="#f4c9a4" stroke="#e0853c" stroke-width="1.400"/><text x="8.500" y="12" font-family="Liberation Sans,sans-serif" font-weight="bold" font-size="10.500" fill="#e0853c" text-anchor="middle">€</text><circle cx="15" cy="14.500" r="7.500" fill="#7fc23c" stroke="#4d9618" stroke-width="1.400"/><text x="15" y="18.500" font-family="Liberation Sans,sans-serif" font-weight="bold" font-size="10.500" fill="#fff" text-anchor="middle">$</text></svg><div class="abs" style="left:282px;top:261px;width:1153px;height:741px;border:1px solid #b4b4b4;background:transparent;"></div><div class="abs" style="left:303px;top:286px;width:1111px;height:88px;border:1px solid #b4b4b4;background:transparent;"></div><div class="t " id="t48" style="left:314.5px;top:305.00px;font-size:15px;line-height:17px;color:#333;transform:scaleX(0.9386);">Faaliyet Kodu</div><div class="t " id="t49" style="left:314.5px;top:335.00px;font-size:15px;line-height:17px;color:#333;transform:scaleX(0.9338);">Faaliyet Adı</div><div class="abs" style="left:407px;top:302px;width:144px;height:24px;border:1px solid #b9b9b9;background:#fff;"></div><div class="abs" style="left:550px;top:302px;width:25px;height:24px;border:1px solid #b9b9b9;background:#ededed;"></div><div class="abs" style="left:556px;top:312px;width:3px;height:3px;background:#555;box-shadow:5px 0 0 #555,10px 0 0 #555"></div><div class="t " id="t50" style="left:409.5px;top:305.00px;font-size:15px;line-height:17px;color:#333;transform:scaleX(0.9827);">20181110</div><div class="abs" style="left:406px;top:329px;width:998px;height:30px;border:1px solid #c4c4c4;background:#e6e6e6;"></div><div class="t " id="t51" style="left:407.5px;top:332.00px;font-size:23.3px;line-height:26px;color:#3a3a3a;transform:scaleX(0.9100);">YEMEKLİ TOPLANTI</div><div class="abs" style="left:303px;top:409px;width:1112px;height:567px;border:1px solid #b4b4b4;background:transparent;"></div><div class="abs" style="left:304px;top:378px;width:101px;height:32px;border:1px solid #b4b4b4;background:#e3e3e3;border-bottom:0;border-right:0"></div><div class="abs" style="left:467px;top:378px;width:83px;height:32px;border:1px solid #b4b4b4;background:#e3e3e3;border-bottom:0;border-left:0"></div><div class="abs" style="left:549px;top:378px;width:111px;height:32px;border:1px solid #b4b4b4;background:#e3e3e3;border-bottom:0"></div><div class="abs" style="left:404px;top:376px;width:64px;height:35px;border:1px solid #b4b4b4;background:#e3e3e3;border-bottom:0"></div><div class="t " id="t52" style="left:316.3px;top:387.00px;font-size:15px;line-height:17px;color:#333;transform:scaleX(0.9374);"><u>G</u>elir / Gider</div><div class="t " id="t53" style="left:417.2px;top:386.00px;font-size:15px;line-height:17px;color:#333;transform:scaleX(0.9433);"><u>B</u>ütçe</div><div class="t " id="t54" style="left:479.2px;top:387.00px;font-size:15px;line-height:17px;color:#333;transform:scaleX(0.8992);"><u>K</u>atılanlar</div><div class="t " id="t55" style="left:561.3px;top:387.00px;font-size:15px;line-height:17px;color:#333;transform:scaleX(0.9355);">Katıl<u>m</u>ayanlar</div><div class="abs" style="left:311px;top:417px;width:1095px;height:551px;border:1px solid #b0b0b0;background:#fff;"></div><div class="abs" style="left:312px;top:418px;width:1px;height:138px;background:#a8a8a8"></div><div class="abs" style="left:312px;top:930px;width:1px;height:37px;background:#a8a8a8"></div><div class="abs" style="left:313px;top:418px;width:807px;height:26px;background:#e3e3e3;border-bottom:1px solid #a9a9a9;border-right:1px solid #a9a9a9"></div><div class="abs" style="left:329px;top:419px;width:104px;height:24px;background:#d6d6d6"></div><div class="abs" style="left:328px;top:419px;width:1px;height:24px;background:#a9a9a9"></div><div class="abs" style="left:433px;top:419px;width:1px;height:24px;background:#a9a9a9"></div><div class="abs" style="left:599px;top:419px;width:1px;height:24px;background:#a9a9a9"></div><div class="abs" style="left:716px;top:419px;width:1px;height:24px;background:#a9a9a9"></div><div class="abs" style="left:961px;top:419px;width:1px;height:24px;background:#a9a9a9"></div><div class="abs" style="left:313px;top:418px;width:807px;height:1px;background:#a4a4a4"></div><div class="t " id="t56" style="left:331.3px;top:423.00px;font-size:15px;line-height:17px;color:#333;transform:scaleX(1.0241);">Tarih</div><div class="t " id="t57" style="left:437px;top:423.00px;font-size:15px;line-height:17px;color:#333;transform:scaleX(0.9451);">Faaliyet Kodu</div><div class="t " id="t58" style="left:603.3px;top:423.00px;font-size:15px;line-height:17px;color:#333;transform:scaleX(0.9674);">Üye No</div><div class="t " id="t59" style="left:720px;top:423.00px;font-size:15px;line-height:17px;color:#333;transform:scaleX(0.9062);">Açıklama</div><div class="t " id="t60" style="left:966px;top:423.00px;font-size:15px;line-height:17px;color:#333;transform:scaleX(1.0275);">Tutar</div><div class="abs" style="left:313px;top:419px;width:15px;height:24px;background:#e9e9e9"></div><svg class="abs" style="left:315px;top:425.5px" width="11" height="11" viewBox="0 0 11 11"><path d="M5.500 0.500V10.500M0.500 5.500H10.500M2 2L9 9M9 2L2 9" stroke="#8c8c8c" stroke-width="2.100"/><circle cx="5.500" cy="5.500" r="2" fill="#8c8c8c"/></svg><svg class="abs" style="left:418px;top:423px" width="11" height="11" viewBox="0 0 11 11"><path d="M0.500 2Q5.500 5.500 10.500 2L6.800 5.800V10L4.500 8.800V5.800Z" fill="#7a7a7a"/><ellipse cx="5.500" cy="2" rx="5" ry="1.600" fill="#c9c9c9" stroke="#8a8a8a" stroke-width="0.900"/></svg><div class="abs" style="left:313px;top:444px;width:807px;height:55px;background:#e3e3e3;border-bottom:1px solid #c9c9c9"></div><div class="abs" style="left:329px;top:499px;width:791px;height:57px;background:#cce4f7;border-bottom:1px solid #c4cdd6"></div><div class="abs" style="left:313px;top:444px;width:15px;height:54px;background:#eaeaea"></div><div class="abs" style="left:313px;top:499px;width:16px;height:57px;background:#eaeaea;border-bottom:1px solid #a9a9a9"></div><div class="abs" style="left:328px;top:444px;width:1px;height:112px;background:#b9b9b9"></div><div class="abs" style="left:313px;top:498px;width:16px;height:1px;background:#b9b9b9"></div><div class="abs" style="left:1119px;top:444px;width:1px;height:112px;background:#d0d0d0"></div><svg class="abs" style="left:339.5px;top:480.5px" width="6" height="11.5" viewBox="0 0 6 11.5"><path d="M0 0L6 5.75L0 11.5Z" fill="#666"/></svg><svg class="abs" style="left:339.5px;top:537px" width="6" height="11.5" viewBox="0 0 6 11.5"><path d="M0 0L6 5.75L0 11.5Z" fill="#666"/></svg><svg class="abs" style="left:318px;top:522.5px" width="6" height="10.5" viewBox="0 0 6 10.5"><path d="M0 0L6 5.25L0 10.5Z" fill="#707070"/></svg><div class="t " id="t61" style="left:359.6px;top:478.00px;font-size:15px;line-height:17px;color:#444;transform:scaleX(0.9741);">İşlem Tipi : Gelir Kaynağı(Bütçe)</div><div class="t " id="t62" style="left:359.6px;top:534.00px;font-size:15px;line-height:17px;color:#444;transform:scaleX(0.9782);">İşlem Tipi : Gider Kaynağı(Bütçe)</div><div class="t " id="t63" style="left:1057.8px;top:478.00px;font-size:15px;line-height:17px;color:#444;transform:scaleX(1.0036);">8 500,00</div><div class="t " id="t64" style="left:1057.8px;top:534.00px;font-size:15px;line-height:17px;color:#444;transform:scaleX(1.0036);">5 600,00</div><div class="abs" style="left:313px;top:930px;width:807px;height:37px;background:#e3e3e3;border-top:1px solid #a9a9a9;border-right:1px solid #a9a9a9"></div><div class="abs" style="left:964px;top:933px;width:153px;height:32px;border:1px solid #b0b0b0;background:#e3e3e3;"></div><div class="t " id="t65" style="left:1045px;top:941.00px;font-size:15px;line-height:17px;color:#444;transform:scaleX(0.9950);">14 100,00</div><div class="t " id="t66" style="left:1.5px;top:1015.00px;font-size:15px;line-height:17px;color:#fdf0e4;transform:scaleX(0.9039);">USD:</div><div class="t " id="t67" style="left:49px;top:1015.00px;font-size:15px;line-height:17px;color:#fdf0e4;transform:scaleX(0.9518);">Alış: 5,4242</div><div class="t " id="t68" style="left:139px;top:1015.00px;font-size:15px;line-height:17px;color:#fdf0e4;transform:scaleX(0.9660);">Satış: 5,4340</div><div class="t " id="t69" style="left:287px;top:1015.00px;font-size:15px;line-height:17px;color:#fdf0e4;transform:scaleX(0.9941);">Son İşlem (Hazırla) : 00:00 000 ms</div>
</body>
</html>
